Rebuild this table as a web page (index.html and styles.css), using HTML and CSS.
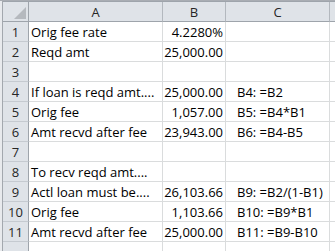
FILE: index.html
```html
<!DOCTYPE html>
<html>
<head>
<meta charset="utf-8">
<link rel="stylesheet" href="styles.css">
</head>
<body>
<div class="frame">
  <div class="fbar"><div class="namebox"></div><div class="fx"></div><div class="rest"></div></div>
  <div class="gap"></div>
  <div class="sheet">
    <div class="row head">
      <div class="corner"><svg width="12" height="12" viewBox="0 0 12 12"><polygon points="12,0 12,12 0,12" fill="#b5b9be"/></svg></div>
      <div class="ch">A</div><div class="ch">B</div><div class="ch">C</div><div class="ch last"></div>
    </div>
    <div class="row"><div class="rh">1</div><div class="c">Orig fee rate</div><div class="c num">4.2280%</div><div class="c note"></div><div class="c last"></div></div>
    <div class="row"><div class="rh">2</div><div class="c">Reqd amt</div><div class="c num">25,000.00</div><div class="c note"></div><div class="c last"></div></div>
    <div class="row"><div class="rh">3</div><div class="c"></div><div class="c num"></div><div class="c note"></div><div class="c last"></div></div>
    <div class="row"><div class="rh">4</div><div class="c">If loan is reqd amt....</div><div class="c num">25,000.00</div><div class="c note">B4: =B2</div><div class="c last"></div></div>
    <div class="row"><div class="rh">5</div><div class="c">Orig fee</div><div class="c num">1,057.00</div><div class="c note">B5: =B4*B1</div><div class="c last"></div></div>
    <div class="row"><div class="rh">6</div><div class="c">Amt recvd after fee</div><div class="c num">23,943.00</div><div class="c note">B6: =B4-B5</div><div class="c last"></div></div>
    <div class="row"><div class="rh">7</div><div class="c"></div><div class="c num"></div><div class="c note"></div><div class="c last"></div></div>
    <div class="row"><div class="rh">8</div><div class="c">To recv reqd amt....</div><div class="c num"></div><div class="c note"></div><div class="c last"></div></div>
    <div class="row"><div class="rh">9</div><div class="c">Actl loan must be....</div><div class="c num">26,103.66</div><div class="c note">B9: =B2/(1-B1)</div><div class="c last"></div></div>
    <div class="row"><div class="rh">10</div><div class="c">Orig fee</div><div class="c num">1,103.66</div><div class="c note">B10: =B9*B1</div><div class="c last"></div></div>
    <div class="row"><div class="rh">11</div><div class="c">Amt recvd after fee</div><div class="c num">25,000.00</div><div class="c note">B11: =B9-B10</div><div class="c last"></div></div>
    <div class="row"><div class="rh"></div><div class="c"></div><div class="c num"></div><div class="c note"></div><div class="c last"></div></div>
  </div>
</div>
</body>
</html>
```
FILE: styles.css
```css
* { box-sizing: border-box; }
html, body { margin: 0; padding: 0; }
body {
  width: 335px;
  height: 251px;
  overflow: hidden;
  background: #ffffff;
  font-family: "Open Sans", "Liberation Sans", sans-serif;
  font-size: 13px;
  color: #000;
}
.frame {
  display: flex;
  flex-direction: column;
  background: #e8eaed;
  height: 100%;
}
.fbar {
  display: flex;
  height: 4px;
  background: #e6e8eb;
  border-bottom: 1px solid #a9adb3;
}
.namebox { width: 20px; border-right: 1px solid #a9adb3; }
.fx { width: 166px; border-right: 1px solid #a9adb3; }
.rest { flex: 1; }
.gap { height: 3px; background: #f4f5f6; }
.sheet {
  margin-left: 2px;
  border-left: 1px solid #a3a8ae;
  background: #fff;
  flex: 1;
}
.row {
  display: grid;
  grid-template-columns: 26px 134px 63px 104px 1fr;
  height: 20px;
}
.row.head {
  height: 21px;
  border-top: 1px solid #9ea4ab;
}
.corner {
  background: #dfe3e8;
  border-right: 1px solid #9ea4ab;
  border-bottom: 1px solid #9ea4ab;
  display: flex;
  justify-content: flex-end;
  align-items: flex-end;
  padding: 0 2px 2px 0;
}
.ch {
  background: #dfe3e8;
  border-right: 1px solid #b3b8be;
  border-bottom: 1px solid #9ea4ab;
  text-align: center;
  color: #262626;
  line-height: 18px;
  padding-top: 1px;
}
.rh {
  background: #dfe3e8;
  border-right: 1px solid #9ea4ab;
  border-bottom: 1px solid #c5cad0;
  text-align: center;
  color: #262626;
  line-height: 18px;
  padding-top: 1px;
}
.c {
  border-right: 1px solid #dadcdd;
  border-bottom: 1px solid #dadcdd;
  line-height: 18px;
  padding: 1px 0 0 2px;
  white-space: nowrap;
  overflow: hidden;
}
.num { text-align: right; padding-right: 2px; padding-left: 0; }
.note { padding-left: 11px; }
.last { border-right: none; }
```
